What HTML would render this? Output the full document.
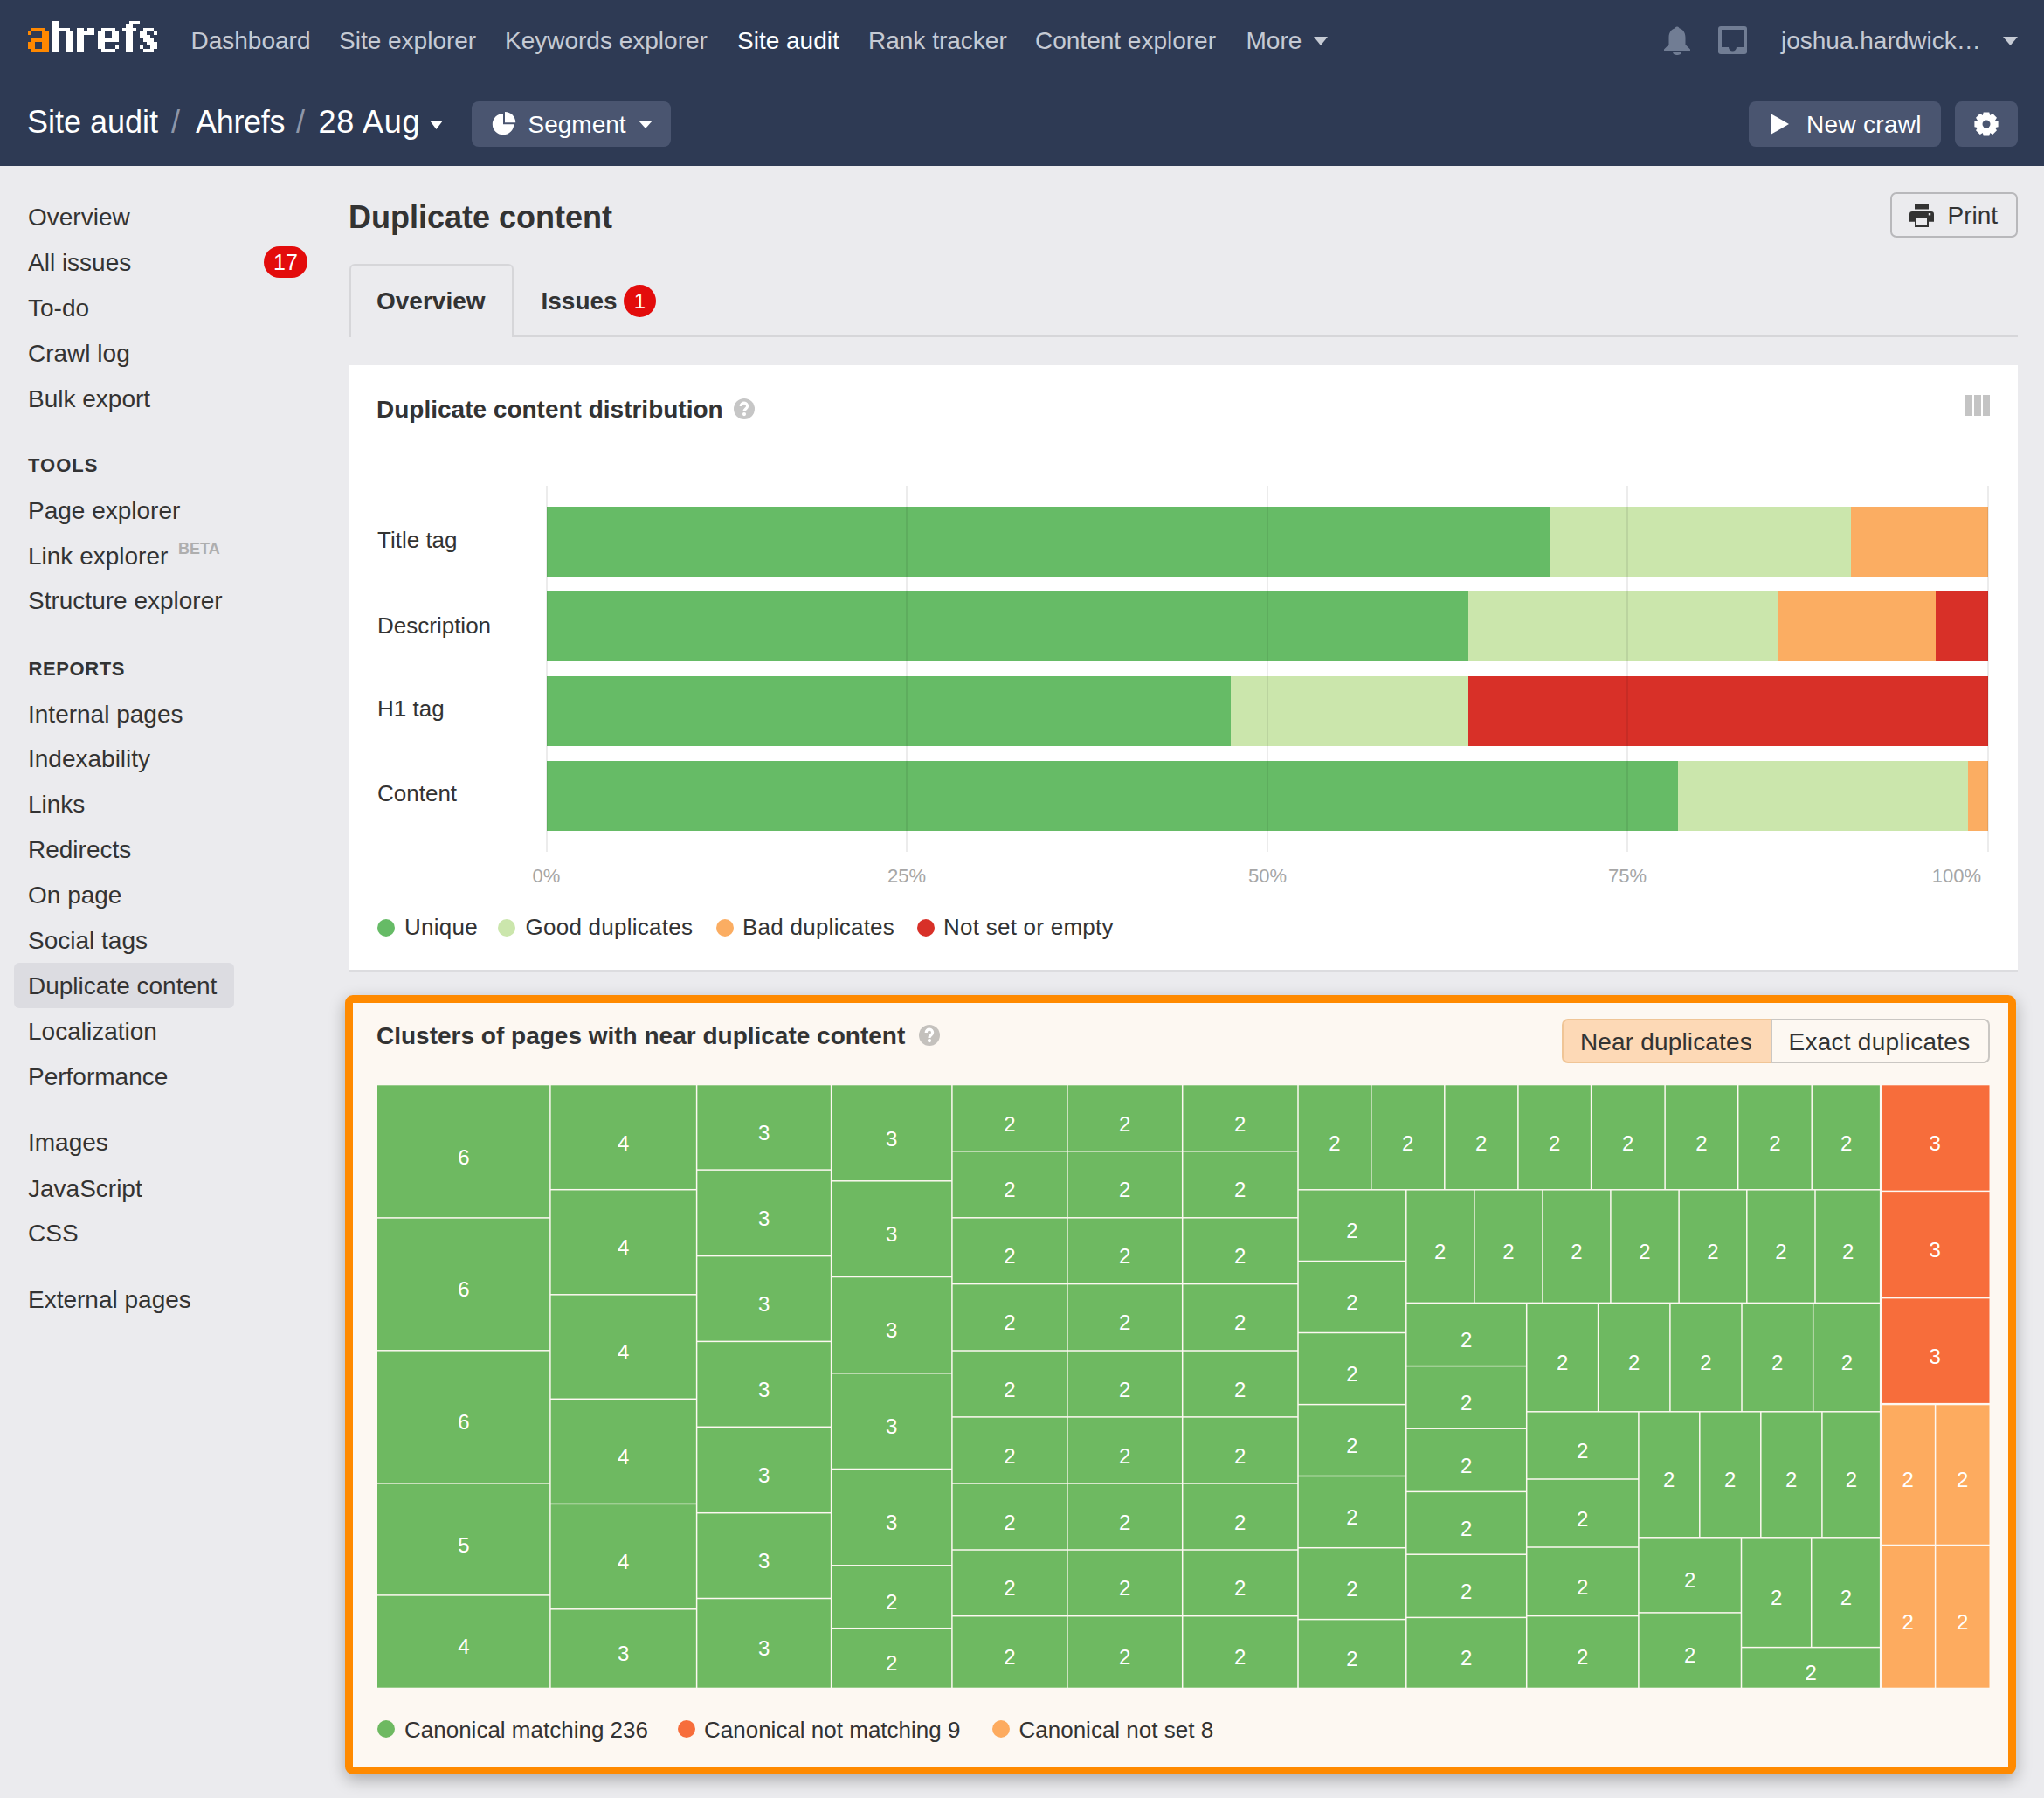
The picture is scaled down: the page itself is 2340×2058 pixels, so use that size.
<!DOCTYPE html>
<html><head><meta charset="utf-8"><title>Duplicate content</title>
<style>
html,body{margin:0;padding:0;}
body{width:2340px;height:2058px;overflow:hidden;position:relative;background:#ebebee;font-family:"Liberation Sans", sans-serif;}
.t{position:absolute;white-space:nowrap;line-height:1;}
.r{position:absolute;}
</style></head><body>
<div class="r" style="left:0.0px;top:0.0px;width:2340.0px;height:190.0px;background:#2e3a54;"></div>
<svg class="r" style="left:32px;top:24px" width="152" height="36" viewBox="0 0 152 36" shape-rendering="crispEdges"><rect x="16" y="12" width="4" height="4" fill="#ff8800"/><rect x="20" y="16" width="4" height="4" fill="#ff8800"/><rect x="16" y="24" width="4" height="4" fill="#ff8800"/><rect x="20" y="28" width="4" height="4" fill="#ff8800"/><rect x="8" y="8" width="4" height="4" fill="#ff8800"/><rect x="4" y="24" width="4" height="4" fill="#ff8800"/><rect x="8" y="20" width="4" height="4" fill="#ff8800"/><rect x="8" y="32" width="4" height="4" fill="#ff8800"/><rect x="16" y="8" width="4" height="4" fill="#ff8800"/><rect x="16" y="20" width="4" height="4" fill="#ff8800"/><rect x="20" y="24" width="4" height="4" fill="#ff8800"/><rect x="16" y="32" width="4" height="4" fill="#ff8800"/><rect x="20" y="12" width="4" height="4" fill="#ff8800"/><rect x="0" y="28" width="4" height="4" fill="#ff8800"/><rect x="4" y="8" width="4" height="4" fill="#ff8800"/><rect x="4" y="20" width="4" height="4" fill="#ff8800"/><rect x="4" y="32" width="4" height="4" fill="#ff8800"/><rect x="12" y="8" width="4" height="4" fill="#ff8800"/><rect x="16" y="28" width="4" height="4" fill="#ff8800"/><rect x="12" y="20" width="4" height="4" fill="#ff8800"/><rect x="16" y="16" width="4" height="4" fill="#ff8800"/><rect x="12" y="32" width="4" height="4" fill="#ff8800"/><rect x="20" y="20" width="4" height="4" fill="#ff8800"/><rect x="20" y="32" width="4" height="4" fill="#ff8800"/><rect x="0" y="12" width="4" height="4" fill="#ff8800"/><rect x="0" y="24" width="4" height="4" fill="#ff8800"/><rect x="4" y="28" width="4" height="4" fill="#ff8800"/><rect x="48" y="16" width="4" height="4" fill="#fff"/><rect x="144" y="28" width="4" height="4" fill="#fff"/><rect x="68" y="12" width="4" height="4" fill="#fff"/><rect x="32" y="0" width="4" height="4" fill="#fff"/><rect x="120" y="0" width="4" height="4" fill="#fff"/><rect x="112" y="12" width="4" height="4" fill="#fff"/><rect x="44" y="20" width="4" height="4" fill="#fff"/><rect x="128" y="12" width="4" height="4" fill="#fff"/><rect x="96" y="32" width="4" height="4" fill="#fff"/><rect x="60" y="20" width="4" height="4" fill="#fff"/><rect x="116" y="16" width="4" height="4" fill="#fff"/><rect x="140" y="32" width="4" height="4" fill="#fff"/><rect x="28" y="4" width="4" height="4" fill="#fff"/><rect x="112" y="20" width="4" height="4" fill="#fff"/><rect x="32" y="8" width="4" height="4" fill="#fff"/><rect x="120" y="8" width="4" height="4" fill="#fff"/><rect x="44" y="28" width="4" height="4" fill="#fff"/><rect x="60" y="28" width="4" height="4" fill="#fff"/><rect x="116" y="24" width="4" height="4" fill="#fff"/><rect x="28" y="12" width="4" height="4" fill="#fff"/><rect x="72" y="12" width="4" height="4" fill="#fff"/><rect x="84" y="8" width="4" height="4" fill="#fff"/><rect x="136" y="20" width="4" height="4" fill="#fff"/><rect x="56" y="32" width="4" height="4" fill="#fff"/><rect x="112" y="28" width="4" height="4" fill="#fff"/><rect x="32" y="16" width="4" height="4" fill="#fff"/><rect x="128" y="28" width="4" height="4" fill="#fff"/><rect x="96" y="12" width="4" height="4" fill="#fff"/><rect x="28" y="20" width="4" height="4" fill="#fff"/><rect x="84" y="16" width="4" height="4" fill="#fff"/><rect x="88" y="20" width="4" height="4" fill="#fff"/><rect x="44" y="8" width="4" height="4" fill="#fff"/><rect x="132" y="32" width="4" height="4" fill="#fff"/><rect x="96" y="20" width="4" height="4" fill="#fff"/><rect x="60" y="8" width="4" height="4" fill="#fff"/><rect x="100" y="16" width="4" height="4" fill="#fff"/><rect x="140" y="20" width="4" height="4" fill="#fff"/><rect x="28" y="28" width="4" height="4" fill="#fff"/><rect x="144" y="24" width="4" height="4" fill="#fff"/><rect x="48" y="24" width="4" height="4" fill="#fff"/><rect x="56" y="12" width="4" height="4" fill="#fff"/><rect x="68" y="8" width="4" height="4" fill="#fff"/><rect x="112" y="8" width="4" height="4" fill="#fff"/><rect x="44" y="16" width="4" height="4" fill="#fff"/><rect x="140" y="28" width="4" height="4" fill="#fff"/><rect x="60" y="16" width="4" height="4" fill="#fff"/><rect x="64" y="12" width="4" height="4" fill="#fff"/><rect x="28" y="0" width="4" height="4" fill="#fff"/><rect x="80" y="12" width="4" height="4" fill="#fff"/><rect x="136" y="8" width="4" height="4" fill="#fff"/><rect x="48" y="32" width="4" height="4" fill="#fff"/><rect x="56" y="20" width="4" height="4" fill="#fff"/><rect x="92" y="32" width="4" height="4" fill="#fff"/><rect x="112" y="16" width="4" height="4" fill="#fff"/><rect x="128" y="16" width="4" height="4" fill="#fff"/><rect x="132" y="12" width="4" height="4" fill="#fff"/><rect x="60" y="24" width="4" height="4" fill="#fff"/><rect x="28" y="8" width="4" height="4" fill="#fff"/><rect x="72" y="8" width="4" height="4" fill="#fff"/><rect x="116" y="32" width="4" height="4" fill="#fff"/><rect x="80" y="20" width="4" height="4" fill="#fff"/><rect x="88" y="8" width="4" height="4" fill="#fff"/><rect x="136" y="16" width="4" height="4" fill="#fff"/><rect x="56" y="28" width="4" height="4" fill="#fff"/><rect x="36" y="8" width="4" height="4" fill="#fff"/><rect x="32" y="24" width="4" height="4" fill="#fff"/><rect x="132" y="20" width="4" height="4" fill="#fff"/><rect x="96" y="8" width="4" height="4" fill="#fff"/><rect x="140" y="8" width="4" height="4" fill="#fff"/><rect x="28" y="16" width="4" height="4" fill="#fff"/><rect x="116" y="4" width="4" height="4" fill="#fff"/><rect x="80" y="28" width="4" height="4" fill="#fff"/><rect x="136" y="24" width="4" height="4" fill="#fff"/><rect x="84" y="24" width="4" height="4" fill="#fff"/><rect x="48" y="12" width="4" height="4" fill="#fff"/><rect x="32" y="32" width="4" height="4" fill="#fff"/><rect x="96" y="16" width="4" height="4" fill="#fff"/><rect x="100" y="12" width="4" height="4" fill="#fff"/><rect x="116" y="12" width="4" height="4" fill="#fff"/><rect x="124" y="0" width="4" height="4" fill="#fff"/><rect x="84" y="32" width="4" height="4" fill="#fff"/><rect x="48" y="20" width="4" height="4" fill="#fff"/><rect x="56" y="8" width="4" height="4" fill="#fff"/><rect x="92" y="20" width="4" height="4" fill="#fff"/><rect x="32" y="4" width="4" height="4" fill="#fff"/><rect x="140" y="24" width="4" height="4" fill="#fff"/><rect x="44" y="24" width="4" height="4" fill="#fff"/><rect x="100" y="20" width="4" height="4" fill="#fff"/><rect x="116" y="20" width="4" height="4" fill="#fff"/><rect x="88" y="32" width="4" height="4" fill="#fff"/><rect x="48" y="28" width="4" height="4" fill="#fff"/><rect x="56" y="16" width="4" height="4" fill="#fff"/><rect x="112" y="24" width="4" height="4" fill="#fff"/><rect x="32" y="12" width="4" height="4" fill="#fff"/><rect x="132" y="8" width="4" height="4" fill="#fff"/><rect x="44" y="32" width="4" height="4" fill="#fff"/><rect x="100" y="28" width="4" height="4" fill="#fff"/><rect x="60" y="32" width="4" height="4" fill="#fff"/><rect x="116" y="28" width="4" height="4" fill="#fff"/><rect x="80" y="16" width="4" height="4" fill="#fff"/><rect x="84" y="12" width="4" height="4" fill="#fff"/><rect x="56" y="24" width="4" height="4" fill="#fff"/><rect x="144" y="12" width="4" height="4" fill="#fff"/><rect x="112" y="32" width="4" height="4" fill="#fff"/><rect x="32" y="20" width="4" height="4" fill="#fff"/><rect x="40" y="8" width="4" height="4" fill="#fff"/><rect x="132" y="16" width="4" height="4" fill="#fff"/><rect x="116" y="0" width="4" height="4" fill="#fff"/><rect x="80" y="24" width="4" height="4" fill="#fff"/><rect x="28" y="24" width="4" height="4" fill="#fff"/><rect x="84" y="20" width="4" height="4" fill="#fff"/><rect x="92" y="8" width="4" height="4" fill="#fff"/><rect x="136" y="32" width="4" height="4" fill="#fff"/><rect x="108" y="8" width="4" height="4" fill="#fff"/><rect x="112" y="4" width="4" height="4" fill="#fff"/><rect x="32" y="28" width="4" height="4" fill="#fff"/><rect x="44" y="12" width="4" height="4" fill="#fff"/><rect x="60" y="12" width="4" height="4" fill="#fff"/><rect x="116" y="8" width="4" height="4" fill="#fff"/><rect x="28" y="32" width="4" height="4" fill="#fff"/><rect x="84" y="28" width="4" height="4" fill="#fff"/></svg>
<div class="t" style="left:218.5px;top:33.0px;font-size:28px;color:#c5cad4;font-weight:400;">Dashboard</div>
<div class="t" style="left:388.0px;top:33.0px;font-size:28px;color:#c5cad4;font-weight:400;">Site explorer</div>
<div class="t" style="left:578.0px;top:33.0px;font-size:28px;color:#c5cad4;font-weight:400;">Keywords explorer</div>
<div class="t" style="left:844.0px;top:33.0px;font-size:28px;color:#ffffff;font-weight:400;">Site audit</div>
<div class="t" style="left:994.0px;top:33.0px;font-size:28px;color:#c5cad4;font-weight:400;">Rank tracker</div>
<div class="t" style="left:1185.0px;top:33.0px;font-size:28px;color:#c5cad4;font-weight:400;">Content explorer</div>
<div class="t" style="left:1426.5px;top:33.0px;font-size:28px;color:#c5cad4;font-weight:400;">More</div>
<svg class="r" style="left:1504px;top:42px" width="16" height="10" viewBox="0 0 16 10"><path d="M0 0H16L8.0 10Z" fill="#c5cad4"/></svg>
<svg class="r" style="left:1903px;top:29px" width="34" height="34" viewBox="0 0 34 34"><g fill="#717d94"><circle cx="17" cy="4" r="2.5"/><path d="M17 3C10.5 3 7.5 8 7.5 14V22L2 27.5V29H32V27.5L26.5 22V14C26.5 8 23.5 3 17 3Z"/><path d="M12 30.5H22C22 33 19.5 34 17 34S12 33 12 30.5Z"/></g></svg>
<svg class="r" style="left:1967px;top:30px" width="33" height="32" viewBox="0 0 33 32"><rect x="0" y="0" width="33" height="32" rx="3" fill="#717d94"/><path d="M4 4H29V24H21A4.5 4.5 0 0 1 12 24H4Z" fill="#2e3a54"/></svg>
<div class="t" style="left:2039.0px;top:33.0px;font-size:28px;color:#c5cad4;font-weight:400;">joshua.hardwick…</div>
<svg class="r" style="left:2293px;top:42px" width="17" height="10" viewBox="0 0 17 10"><path d="M0 0H17L8.5 10Z" fill="#c5cad4"/></svg>
<div class="t" style="left:31.0px;top:121.5px;font-size:36px;color:#ffffff;font-weight:400;">Site audit</div>
<div class="t" style="left:196.0px;top:121.5px;font-size:36px;color:#8e96a8;font-weight:400;">/</div>
<div class="t" style="left:224.0px;top:121.5px;font-size:36px;color:#ffffff;font-weight:400;letter-spacing:-0.3px;">Ahrefs</div>
<div class="t" style="left:339.0px;top:121.5px;font-size:36px;color:#8e96a8;font-weight:400;">/</div>
<div class="t" style="left:364.5px;top:121.5px;font-size:36px;color:#ffffff;font-weight:400;letter-spacing:0.8px;">28 Aug</div>
<svg class="r" style="left:492px;top:138px" width="15" height="10" viewBox="0 0 15 10"><path d="M0 0H15L7.5 10Z" fill="#ffffff"/></svg>
<div class="r" style="left:540.0px;top:116.0px;width:228.0px;height:52.0px;background:#4a5570;border-radius:8px;"></div>
<svg class="r" style="left:560px;top:125px" width="35" height="35" viewBox="0 0 35 35"><path d="M16 17.2V5A12.2 12.2 0 1 0 28.2 17.2Z" fill="#fff"/><path d="M18 15.2V3A12.2 12.2 0 0 1 30.2 15.2Z" fill="#fff"/></svg>
<div class="t" style="left:604.5px;top:129.0px;font-size:28px;color:#ffffff;font-weight:400;">Segment</div>
<svg class="r" style="left:731px;top:138px" width="16" height="9" viewBox="0 0 16 9"><path d="M0 0H16L8.0 9Z" fill="#ffffff"/></svg>
<div class="r" style="left:2002.0px;top:116.0px;width:220.0px;height:52.0px;background:#4a5570;border-radius:8px;"></div>
<svg class="r" style="left:2027px;top:130px" width="21" height="24" viewBox="0 0 21 24"><path d="M0 0L21 12L0 24Z" fill="#fff"/></svg>
<div class="t" style="left:2068.0px;top:129.3px;font-size:28px;color:#ffffff;font-weight:400;letter-spacing:0.3px;">New crawl</div>
<div class="r" style="left:2238.0px;top:116.0px;width:72.0px;height:52.0px;background:#4a5570;border-radius:8px;"></div>
<svg class="r" style="left:2260px;top:128px" width="28" height="28" viewBox="0 0 28 28"><path d="M27.60 10.67 L27.60 17.33 L23.59 18.28 L23.81 17.75 L25.97 21.26 L21.26 25.97 L17.75 23.81 L18.28 23.59 L17.33 27.60 L10.67 27.60 L9.72 23.59 L10.25 23.81 L6.74 25.97 L2.03 21.26 L4.19 17.75 L4.41 18.28 L0.40 17.33 L0.40 10.67 L4.41 9.72 L4.19 10.25 L2.03 6.74 L6.74 2.03 L10.25 4.19 L9.72 4.41 L10.67 0.40 L17.33 0.40 L18.28 4.41 L17.75 4.19 L21.26 2.03 L25.97 6.74 L23.81 10.25 L23.59 9.72Z" fill="#fff"/><circle cx="14" cy="14" r="4.5" fill="#4a5570"/></svg>
<div class="r" style="left:16.0px;top:1102.0px;width:252.0px;height:52.0px;background:#dcdce1;border-radius:6px;"></div>
<div class="t" style="left:32.0px;top:235.0px;font-size:28px;color:#333333;font-weight:400;">Overview</div>
<div class="t" style="left:32.0px;top:287.0px;font-size:28px;color:#333333;font-weight:400;">All issues</div>
<div class="t" style="left:32.0px;top:339.0px;font-size:28px;color:#333333;font-weight:400;">To-do</div>
<div class="t" style="left:32.0px;top:391.0px;font-size:28px;color:#333333;font-weight:400;">Crawl log</div>
<div class="t" style="left:32.0px;top:443.0px;font-size:28px;color:#333333;font-weight:400;">Bulk export</div>
<div class="t" style="left:32.0px;top:571.0px;font-size:28px;color:#333333;font-weight:400;">Page explorer</div>
<div class="t" style="left:32.0px;top:622.5px;font-size:28px;color:#333333;font-weight:400;">Link explorer</div>
<div class="t" style="left:32.0px;top:674.0px;font-size:28px;color:#333333;font-weight:400;">Structure explorer</div>
<div class="t" style="left:32.0px;top:803.6px;font-size:28px;color:#333333;font-weight:400;">Internal pages</div>
<div class="t" style="left:32.0px;top:855.0px;font-size:28px;color:#333333;font-weight:400;">Indexability</div>
<div class="t" style="left:32.0px;top:906.5px;font-size:28px;color:#333333;font-weight:400;">Links</div>
<div class="t" style="left:32.0px;top:959.0px;font-size:28px;color:#333333;font-weight:400;">Redirects</div>
<div class="t" style="left:32.0px;top:1011.0px;font-size:28px;color:#333333;font-weight:400;">On page</div>
<div class="t" style="left:32.0px;top:1062.5px;font-size:28px;color:#333333;font-weight:400;">Social tags</div>
<div class="t" style="left:32.0px;top:1115.0px;font-size:28px;color:#333333;font-weight:400;">Duplicate content</div>
<div class="t" style="left:32.0px;top:1166.6px;font-size:28px;color:#333333;font-weight:400;">Localization</div>
<div class="t" style="left:32.0px;top:1218.6px;font-size:28px;color:#333333;font-weight:400;">Performance</div>
<div class="t" style="left:32.0px;top:1294.0px;font-size:28px;color:#333333;font-weight:400;">Images</div>
<div class="t" style="left:32.0px;top:1346.5px;font-size:28px;color:#333333;font-weight:400;">JavaScript</div>
<div class="t" style="left:32.0px;top:1398.4px;font-size:28px;color:#333333;font-weight:400;">CSS</div>
<div class="t" style="left:32.0px;top:1474.0px;font-size:28px;color:#333333;font-weight:400;">External pages</div>
<div class="t" style="left:32.0px;top:522.3px;font-size:22px;color:#333333;font-weight:700;letter-spacing:1px;">TOOLS</div>
<div class="t" style="left:32.5px;top:755.0px;font-size:22px;color:#333333;font-weight:700;letter-spacing:0.6px;">REPORTS</div>
<div class="t" style="left:204.0px;top:619.0px;font-size:18px;color:#aeaeae;font-weight:700;letter-spacing:0px;">BETA</div>
<div class="r" style="left:302.0px;top:282.0px;width:50.0px;height:36.0px;background:#e30c0c;border-radius:18px;"></div>
<div class="t" style="left:302px;top:282px;width:50px;height:36px;line-height:36px;text-align:center;font-size:25px;color:#fff">17</div>
<div class="t" style="left:399.0px;top:230.6px;font-size:36px;color:#333333;font-weight:700;">Duplicate content</div>
<div class="r" style="left:2164px;top:220px;width:146px;height:52px;box-sizing:border-box;border:2px solid #b8b8bb;border-radius:7px;"></div>
<svg class="r" style="left:2186px;top:234px" width="28" height="26" viewBox="0 0 28 26"><rect x="6" y="0" width="16" height="5.5" fill="#333"/><path d="M3 8H25A3 3 0 0 1 28 11V19.8H22V15H6V19.8H0V11A3 3 0 0 1 3 8Z" fill="#333"/><path d="M6 15H22V26H6Z" fill="#333"/><rect x="8" y="16" width="12" height="8" fill="#ebebee"/><rect x="21.8" y="10" width="2.4" height="2.4" fill="#ebebee"/></svg>
<div class="t" style="left:2229.5px;top:233.0px;font-size:28px;color:#333333;font-weight:400;">Print</div>
<div class="r" style="left:400.0px;top:384.0px;width:1910.0px;height:2.0px;background:#d6d6d9;"></div>
<div class="r" style="left:400px;top:302px;width:188px;height:84px;box-sizing:border-box;border:2px solid #d6d6d9;border-bottom:none;border-radius:6px 6px 0 0;background:#ebebee;"></div>
<div class="t" style="left:431.0px;top:330.7px;font-size:28px;color:#333333;font-weight:700;">Overview</div>
<div class="t" style="left:619.5px;top:330.7px;font-size:28px;color:#333333;font-weight:700;">Issues</div>
<div class="r" style="left:714px;top:326px;width:37px;height:37px;border-radius:50%;background:#e30c0c;"></div>
<div class="t" style="left:714px;top:326px;width:37px;height:37px;line-height:38px;text-align:center;font-size:24px;color:#fff">1</div>
<div class="r" style="left:400.0px;top:418.0px;width:1910.0px;height:692.0px;background:#ffffff;border-bottom:2px solid #dcdcdf;"></div>
<div class="t" style="left:431.0px;top:455.1px;font-size:28px;color:#333333;font-weight:700;">Duplicate content distribution</div>
<svg class="r" style="left:840px;top:456px" width="24" height="24" viewBox="0 0 24 24"><circle cx="12" cy="12" r="12" fill="#c6c6c6"/><path d="M8.2 9C8.2 6.5 10 5.2 12 5.2C14.2 5.2 15.6 6.8 15.6 8.8C15.6 10.8 14 11.6 13 12.6C12.2 13.3 12 14 12 15" fill="none" stroke="#fff" stroke-width="3.2"/><circle cx="12" cy="18.1" r="2.1" fill="#fff"/></svg>
<div class="r" style="left:2250.0px;top:452.0px;width:8.0px;height:24.0px;background:#c4c4c4;"></div>
<div class="r" style="left:2260.0px;top:452.0px;width:8.0px;height:24.0px;background:#c4c4c4;"></div>
<div class="r" style="left:2270.0px;top:452.0px;width:8.0px;height:24.0px;background:#c4c4c4;"></div>
<div class="r" style="left:626.0px;top:580.0px;width:1149.0px;height:80.0px;background:#66bb66;"></div>
<div class="r" style="left:1775.0px;top:580.0px;width:344.0px;height:80.0px;background:#cbe6ac;"></div>
<div class="r" style="left:2119.0px;top:580.0px;width:157.0px;height:80.0px;background:#fbad62;"></div>
<div class="r" style="left:626.0px;top:677.0px;width:1055.0px;height:80.0px;background:#66bb66;"></div>
<div class="r" style="left:1681.0px;top:677.0px;width:354.0px;height:80.0px;background:#cbe6ac;"></div>
<div class="r" style="left:2035.0px;top:677.0px;width:181.0px;height:80.0px;background:#fbad62;"></div>
<div class="r" style="left:2216.0px;top:677.0px;width:60.0px;height:80.0px;background:#d83028;"></div>
<div class="r" style="left:626.0px;top:774.0px;width:783.0px;height:80.0px;background:#66bb66;"></div>
<div class="r" style="left:1409.0px;top:774.0px;width:271.5px;height:80.0px;background:#cbe6ac;"></div>
<div class="r" style="left:1680.5px;top:774.0px;width:595.5px;height:80.0px;background:#d83028;"></div>
<div class="r" style="left:626.0px;top:871.0px;width:1295.0px;height:80.0px;background:#66bb66;"></div>
<div class="r" style="left:1921.0px;top:871.0px;width:331.5px;height:80.0px;background:#cbe6ac;"></div>
<div class="r" style="left:2252.5px;top:871.0px;width:23.5px;height:80.0px;background:#fbad62;"></div>
<div class="r" style="left:624.9px;top:556.0px;width:2.0px;height:419.0px;background:rgba(0,0,0,0.075);"></div>
<div class="r" style="left:1037.1px;top:556.0px;width:2.0px;height:419.0px;background:rgba(0,0,0,0.075);"></div>
<div class="r" style="left:1449.9px;top:556.0px;width:2.0px;height:419.0px;background:rgba(0,0,0,0.075);"></div>
<div class="r" style="left:1862.0px;top:556.0px;width:2.0px;height:419.0px;background:rgba(0,0,0,0.075);"></div>
<div class="r" style="left:2275.0px;top:556.0px;width:2.0px;height:419.0px;background:rgba(0,0,0,0.075);"></div>
<div class="t" style="left:432.0px;top:604.6px;font-size:26px;color:#333333;font-weight:400;">Title tag</div>
<div class="t" style="left:432.0px;top:702.5px;font-size:26px;color:#333333;font-weight:400;">Description</div>
<div class="t" style="left:432.0px;top:798.4px;font-size:26px;color:#333333;font-weight:400;">H1 tag</div>
<div class="t" style="left:432.0px;top:895.0px;font-size:26px;color:#333333;font-weight:400;">Content</div>
<div class="t" style="left:565.5px;top:992px;width:120px;text-align:center;font-size:22px;color:#a6a6a6">0%</div>
<div class="t" style="left:978px;top:992px;width:120px;text-align:center;font-size:22px;color:#a6a6a6">25%</div>
<div class="t" style="left:1391px;top:992px;width:120px;text-align:center;font-size:22px;color:#a6a6a6">50%</div>
<div class="t" style="left:1803px;top:992px;width:120px;text-align:center;font-size:22px;color:#a6a6a6">75%</div>
<div class="t" style="left:2148px;top:992px;width:120px;text-align:right;font-size:22px;color:#a6a6a6">100%</div>
<div class="r" style="left:432px;top:1052.0px;width:20px;height:20px;border-radius:50%;background:#66bb66;"></div>
<div class="t" style="left:463.0px;top:1048.4px;font-size:26px;color:#333333;font-weight:400;letter-spacing:0.25px;">Unique</div>
<div class="r" style="left:570px;top:1052.0px;width:20px;height:20px;border-radius:50%;background:#cbe6ac;"></div>
<div class="t" style="left:601.5px;top:1048.4px;font-size:26px;color:#333333;font-weight:400;letter-spacing:0.25px;">Good duplicates</div>
<div class="r" style="left:820px;top:1052.0px;width:20px;height:20px;border-radius:50%;background:#fbad62;"></div>
<div class="t" style="left:850.0px;top:1048.4px;font-size:26px;color:#333333;font-weight:400;letter-spacing:0.25px;">Bad duplicates</div>
<div class="r" style="left:1050px;top:1052.0px;width:20px;height:20px;border-radius:50%;background:#d83028;"></div>
<div class="t" style="left:1080.0px;top:1048.4px;font-size:26px;color:#333333;font-weight:400;letter-spacing:0.25px;">Not set or empty</div>
<div class="r" style="left:400.0px;top:1150.0px;width:1910.0px;height:878.0px;background:#eef0f0;"></div>
<div class="r" style="left:395px;top:1139px;width:1913px;height:892px;box-sizing:border-box;border:9px solid #ff8a00;border-radius:9px;background:#fdf8f2;box-shadow:0 6px 18px rgba(0,0,0,0.28);"></div>
<div class="t" style="left:431.0px;top:1171.5px;font-size:28px;color:#333333;font-weight:700;">Clusters of pages with near duplicate content</div>
<svg class="r" style="left:1052px;top:1173px" width="24" height="24" viewBox="0 0 24 24"><circle cx="12" cy="12" r="12" fill="#c4c1bd"/><path d="M8.2 9C8.2 6.5 10 5.2 12 5.2C14.2 5.2 15.6 6.8 15.6 8.8C15.6 10.8 14 11.6 13 12.6C12.2 13.3 12 14 12 15" fill="none" stroke="#fff" stroke-width="3.2"/><circle cx="12" cy="18.1" r="2.1" fill="#fff"/></svg>
<div class="r" style="left:1788px;top:1166px;width:240px;height:51px;box-sizing:border-box;border:2px solid #f0c596;border-right:none;border-radius:7px 0 0 7px;background:#fdd9b6;"></div>
<div class="r" style="left:2027px;top:1166px;width:251px;height:51px;box-sizing:border-box;border:2px solid #cac7c3;border-radius:0 7px 7px 0;background:#fdf8f2;"></div>
<div class="t" style="left:1809.0px;top:1179.3px;font-size:28px;color:#333333;font-weight:400;letter-spacing:0.15px;">Near duplicates</div>
<div class="t" style="left:2047.5px;top:1179.3px;font-size:28px;color:#333333;font-weight:400;letter-spacing:0.25px;">Exact duplicates</div>
<svg class="r" style="left:0;top:0" width="2340" height="2058" viewBox="0 0 2340 2058"><rect x="432.00" y="1242.30" width="197.15" height="150.85" fill="#6eb961"/><rect x="432.00" y="1394.65" width="197.15" height="150.40" fill="#6eb961"/><rect x="432.00" y="1546.55" width="197.15" height="150.60" fill="#6eb961"/><rect x="432.00" y="1698.65" width="197.15" height="126.50" fill="#6eb961"/><rect x="432.00" y="1826.65" width="197.15" height="105.05" fill="#6eb961"/><rect x="630.65" y="1242.30" width="166.20" height="118.65" fill="#6eb961"/><rect x="630.65" y="1362.45" width="166.20" height="118.60" fill="#6eb961"/><rect x="630.65" y="1482.55" width="166.20" height="118.00" fill="#6eb961"/><rect x="630.65" y="1602.05" width="166.20" height="118.60" fill="#6eb961"/><rect x="630.65" y="1722.15" width="166.20" height="118.90" fill="#6eb961"/><rect x="630.65" y="1842.55" width="166.20" height="89.15" fill="#6eb961"/><rect x="798.35" y="1242.30" width="152.50" height="96.05" fill="#6eb961"/><rect x="798.35" y="1339.85" width="152.50" height="97.00" fill="#6eb961"/><rect x="798.35" y="1438.35" width="152.50" height="96.30" fill="#6eb961"/><rect x="798.35" y="1536.15" width="152.50" height="96.40" fill="#6eb961"/><rect x="798.35" y="1634.05" width="152.50" height="96.90" fill="#6eb961"/><rect x="798.35" y="1732.45" width="152.50" height="96.30" fill="#6eb961"/><rect x="798.35" y="1830.25" width="152.50" height="101.45" fill="#6eb961"/><rect x="952.35" y="1242.30" width="136.80" height="108.75" fill="#6eb961"/><rect x="952.35" y="1352.55" width="136.80" height="108.20" fill="#6eb961"/><rect x="952.35" y="1462.25" width="136.80" height="108.80" fill="#6eb961"/><rect x="952.35" y="1572.55" width="136.80" height="108.20" fill="#6eb961"/><rect x="952.35" y="1682.25" width="136.80" height="108.80" fill="#6eb961"/><rect x="952.35" y="1792.55" width="136.80" height="70.40" fill="#6eb961"/><rect x="952.35" y="1864.45" width="136.80" height="67.25" fill="#6eb961"/><rect x="1090.65" y="1242.30" width="130.50" height="74.75" fill="#6eb961"/><rect x="1090.65" y="1318.55" width="130.50" height="74.50" fill="#6eb961"/><rect x="1090.65" y="1394.55" width="130.50" height="74.30" fill="#6eb961"/><rect x="1090.65" y="1470.35" width="130.50" height="74.90" fill="#6eb961"/><rect x="1090.65" y="1546.75" width="130.50" height="74.40" fill="#6eb961"/><rect x="1090.65" y="1622.65" width="130.50" height="74.60" fill="#6eb961"/><rect x="1090.65" y="1698.75" width="130.50" height="74.50" fill="#6eb961"/><rect x="1090.65" y="1774.75" width="130.50" height="74.20" fill="#6eb961"/><rect x="1090.65" y="1850.45" width="130.50" height="81.25" fill="#6eb961"/><rect x="1222.65" y="1242.30" width="130.30" height="74.75" fill="#6eb961"/><rect x="1222.65" y="1318.55" width="130.30" height="74.50" fill="#6eb961"/><rect x="1222.65" y="1394.55" width="130.30" height="74.30" fill="#6eb961"/><rect x="1222.65" y="1470.35" width="130.30" height="74.90" fill="#6eb961"/><rect x="1222.65" y="1546.75" width="130.30" height="74.40" fill="#6eb961"/><rect x="1222.65" y="1622.65" width="130.30" height="74.60" fill="#6eb961"/><rect x="1222.65" y="1698.75" width="130.30" height="74.50" fill="#6eb961"/><rect x="1222.65" y="1774.75" width="130.30" height="74.20" fill="#6eb961"/><rect x="1222.65" y="1850.45" width="130.30" height="81.25" fill="#6eb961"/><rect x="1354.45" y="1242.30" width="130.80" height="74.75" fill="#6eb961"/><rect x="1354.45" y="1318.55" width="130.80" height="74.50" fill="#6eb961"/><rect x="1354.45" y="1394.55" width="130.80" height="74.30" fill="#6eb961"/><rect x="1354.45" y="1470.35" width="130.80" height="74.90" fill="#6eb961"/><rect x="1354.45" y="1546.75" width="130.80" height="74.40" fill="#6eb961"/><rect x="1354.45" y="1622.65" width="130.80" height="74.60" fill="#6eb961"/><rect x="1354.45" y="1698.75" width="130.80" height="74.50" fill="#6eb961"/><rect x="1354.45" y="1774.75" width="130.80" height="74.20" fill="#6eb961"/><rect x="1354.45" y="1850.45" width="130.80" height="81.25" fill="#6eb961"/><rect x="1486.75" y="1242.30" width="82.30" height="118.75" fill="#6eb961"/><rect x="1570.55" y="1242.30" width="82.50" height="118.75" fill="#6eb961"/><rect x="1654.55" y="1242.30" width="82.60" height="118.75" fill="#6eb961"/><rect x="1738.65" y="1242.30" width="82.20" height="118.75" fill="#6eb961"/><rect x="1822.35" y="1242.30" width="83.00" height="118.75" fill="#6eb961"/><rect x="1906.85" y="1242.30" width="82.10" height="118.75" fill="#6eb961"/><rect x="1990.45" y="1242.30" width="83.00" height="118.75" fill="#6eb961"/><rect x="2074.95" y="1242.30" width="76.95" height="118.75" fill="#6eb961"/><rect x="1486.75" y="1362.55" width="122.30" height="80.20" fill="#6eb961"/><rect x="1486.75" y="1444.25" width="122.30" height="80.50" fill="#6eb961"/><rect x="1486.75" y="1526.25" width="122.30" height="80.60" fill="#6eb961"/><rect x="1486.75" y="1608.35" width="122.30" height="80.40" fill="#6eb961"/><rect x="1486.75" y="1690.25" width="122.30" height="80.70" fill="#6eb961"/><rect x="1486.75" y="1772.45" width="122.30" height="80.40" fill="#6eb961"/><rect x="1486.75" y="1854.35" width="122.30" height="77.35" fill="#6eb961"/><rect x="1610.55" y="1362.55" width="76.60" height="128.10" fill="#6eb961"/><rect x="1688.65" y="1362.55" width="76.60" height="128.10" fill="#6eb961"/><rect x="1766.75" y="1362.55" width="76.40" height="128.10" fill="#6eb961"/><rect x="1844.65" y="1362.55" width="76.70" height="128.10" fill="#6eb961"/><rect x="1922.85" y="1362.55" width="76.20" height="128.10" fill="#6eb961"/><rect x="2000.55" y="1362.55" width="76.70" height="128.10" fill="#6eb961"/><rect x="2078.75" y="1362.55" width="73.15" height="128.10" fill="#6eb961"/><rect x="1610.55" y="1492.15" width="136.40" height="70.70" fill="#6eb961"/><rect x="1610.55" y="1564.35" width="136.40" height="70.10" fill="#6eb961"/><rect x="1610.55" y="1635.95" width="136.40" height="70.70" fill="#6eb961"/><rect x="1610.55" y="1708.15" width="136.40" height="70.30" fill="#6eb961"/><rect x="1610.55" y="1779.95" width="136.40" height="70.70" fill="#6eb961"/><rect x="1610.55" y="1852.15" width="136.40" height="79.55" fill="#6eb961"/><rect x="1748.45" y="1492.15" width="80.40" height="122.90" fill="#6eb961"/><rect x="1830.35" y="1492.15" width="80.80" height="122.90" fill="#6eb961"/><rect x="1912.65" y="1492.15" width="80.60" height="122.90" fill="#6eb961"/><rect x="1994.75" y="1492.15" width="80.20" height="122.90" fill="#6eb961"/><rect x="2076.45" y="1492.15" width="75.45" height="122.90" fill="#6eb961"/><rect x="1748.45" y="1616.55" width="126.70" height="75.70" fill="#6eb961"/><rect x="1748.45" y="1693.75" width="126.70" height="76.50" fill="#6eb961"/><rect x="1748.45" y="1771.75" width="126.70" height="77.10" fill="#6eb961"/><rect x="1748.45" y="1850.35" width="126.70" height="81.35" fill="#6eb961"/><rect x="1876.65" y="1616.55" width="68.40" height="142.50" fill="#6eb961"/><rect x="1946.55" y="1616.55" width="68.50" height="142.50" fill="#6eb961"/><rect x="2016.55" y="1616.55" width="68.60" height="142.50" fill="#6eb961"/><rect x="2086.65" y="1616.55" width="65.25" height="142.50" fill="#6eb961"/><rect x="1876.65" y="1760.55" width="116.10" height="84.60" fill="#6eb961"/><rect x="1876.65" y="1846.65" width="116.10" height="85.05" fill="#6eb961"/><rect x="1994.25" y="1760.55" width="78.70" height="124.30" fill="#6eb961"/><rect x="2074.45" y="1760.55" width="77.45" height="124.30" fill="#6eb961"/><rect x="1994.25" y="1886.35" width="157.65" height="45.35" fill="#6eb961"/><rect x="2154.30" y="1242.30" width="123.20" height="120.35" fill="#f76d3b"/><rect x="2154.30" y="1364.15" width="123.20" height="120.70" fill="#f76d3b"/><rect x="2154.30" y="1486.35" width="123.20" height="119.55" fill="#f76d3b"/><rect x="2154.30" y="1608.30" width="60.55" height="159.45" fill="#fdab5f"/><rect x="2154.30" y="1769.25" width="60.55" height="162.45" fill="#fdab5f"/><rect x="2216.35" y="1608.30" width="61.15" height="159.45" fill="#fdab5f"/><rect x="2216.35" y="1769.25" width="61.15" height="162.45" fill="#fdab5f"/><g font-family='"Liberation Sans", sans-serif' font-size="24" fill="#fff" text-anchor="middle"><text x="531.0" y="1332.7">6</text><text x="531.0" y="1484.4">6</text><text x="531.0" y="1636.4">6</text><text x="531.0" y="1776.5">5</text><text x="531.0" y="1893.4">4</text><text x="713.8" y="1316.6">4</text><text x="713.8" y="1436.3">4</text><text x="713.8" y="1556.1">4</text><text x="713.8" y="1675.9">4</text><text x="713.8" y="1796.2">4</text><text x="713.8" y="1901.3">3</text><text x="874.6" y="1305.3">3</text><text x="874.6" y="1402.9">3</text><text x="874.6" y="1501.1">3</text><text x="874.6" y="1598.9">3</text><text x="874.6" y="1697.1">3</text><text x="874.6" y="1795.2">3</text><text x="874.6" y="1895.2">3</text><text x="1020.8" y="1311.6">3</text><text x="1020.8" y="1421.2">3</text><text x="1020.8" y="1531.2">3</text><text x="1020.8" y="1641.2">3</text><text x="1020.8" y="1751.2">3</text><text x="1020.8" y="1842.3">2</text><text x="1020.8" y="1912.3">2</text><text x="1155.9" y="1294.6">2</text><text x="1155.9" y="1370.4">2</text><text x="1155.9" y="1446.3">2</text><text x="1155.9" y="1522.4">2</text><text x="1155.9" y="1598.5">2</text><text x="1155.9" y="1674.5">2</text><text x="1155.9" y="1750.6">2</text><text x="1155.9" y="1826.4">2</text><text x="1155.9" y="1905.3">2</text><text x="1287.8" y="1294.6">2</text><text x="1287.8" y="1370.4">2</text><text x="1287.8" y="1446.3">2</text><text x="1287.8" y="1522.4">2</text><text x="1287.8" y="1598.5">2</text><text x="1287.8" y="1674.5">2</text><text x="1287.8" y="1750.6">2</text><text x="1287.8" y="1826.4">2</text><text x="1287.8" y="1905.3">2</text><text x="1419.8" y="1294.6">2</text><text x="1419.8" y="1370.4">2</text><text x="1419.8" y="1446.3">2</text><text x="1419.8" y="1522.4">2</text><text x="1419.8" y="1598.5">2</text><text x="1419.8" y="1674.5">2</text><text x="1419.8" y="1750.6">2</text><text x="1419.8" y="1826.4">2</text><text x="1419.8" y="1905.3">2</text><text x="1527.9" y="1316.6">2</text><text x="1611.8" y="1316.6">2</text><text x="1695.8" y="1316.6">2</text><text x="1779.8" y="1316.6">2</text><text x="1863.8" y="1316.6">2</text><text x="1947.9" y="1316.6">2</text><text x="2031.9" y="1316.6">2</text><text x="2113.6" y="1316.6">2</text><text x="1547.9" y="1417.2">2</text><text x="1547.9" y="1499.1">2</text><text x="1547.9" y="1581.1">2</text><text x="1547.9" y="1663.1">2</text><text x="1547.9" y="1745.2">2</text><text x="1547.9" y="1827.2">2</text><text x="1547.9" y="1907.2">2</text><text x="1648.8" y="1441.2">2</text><text x="1727.0" y="1441.2">2</text><text x="1805.0" y="1441.2">2</text><text x="1883.0" y="1441.2">2</text><text x="1960.9" y="1441.2">2</text><text x="2038.9" y="1441.2">2</text><text x="2115.6" y="1441.2">2</text><text x="1678.8" y="1542.1">2</text><text x="1678.8" y="1614.0">2</text><text x="1678.8" y="1685.9">2</text><text x="1678.8" y="1757.9">2</text><text x="1678.8" y="1829.9">2</text><text x="1678.8" y="1906.2">2</text><text x="1788.7" y="1568.2">2</text><text x="1870.8" y="1568.2">2</text><text x="1953.0" y="1568.2">2</text><text x="2034.8" y="1568.2">2</text><text x="2114.4" y="1568.2">2</text><text x="1811.8" y="1669.0">2</text><text x="1811.8" y="1746.6">2</text><text x="1811.8" y="1824.9">2</text><text x="1811.8" y="1905.2">2</text><text x="1910.8" y="1702.4">2</text><text x="1980.8" y="1702.4">2</text><text x="2050.8" y="1702.4">2</text><text x="2119.5" y="1702.4">2</text><text x="1934.7" y="1817.4">2</text><text x="1934.7" y="1903.4">2</text><text x="2033.6" y="1837.3">2</text><text x="2113.4" y="1837.3">2</text><text x="2073.3" y="1923.2">2</text><text x="2215.3" y="1317.4">3</text><text x="2215.3" y="1439.1">3</text><text x="2215.3" y="1560.9">3</text><text x="2184.3" y="1702.4">2</text><text x="2184.3" y="1864.7">2</text><text x="2246.6" y="1702.4">2</text><text x="2246.6" y="1864.7">2</text></g></svg>
<div class="r" style="left:432px;top:1969.0px;width:20px;height:20px;border-radius:50%;background:#6eb961;"></div>
<div class="t" style="left:463.0px;top:1967.0px;font-size:26px;color:#333333;font-weight:400;">Canonical matching 236</div>
<div class="r" style="left:776px;top:1969.0px;width:20px;height:20px;border-radius:50%;background:#f76d3b;"></div>
<div class="t" style="left:806.0px;top:1967.0px;font-size:26px;color:#333333;font-weight:400;">Canonical not matching 9</div>
<div class="r" style="left:1135.5px;top:1969.0px;width:20px;height:20px;border-radius:50%;background:#fdab5f;"></div>
<div class="t" style="left:1166.5px;top:1967.0px;font-size:26px;color:#333333;font-weight:400;">Canonical not set 8</div>
</body></html>
